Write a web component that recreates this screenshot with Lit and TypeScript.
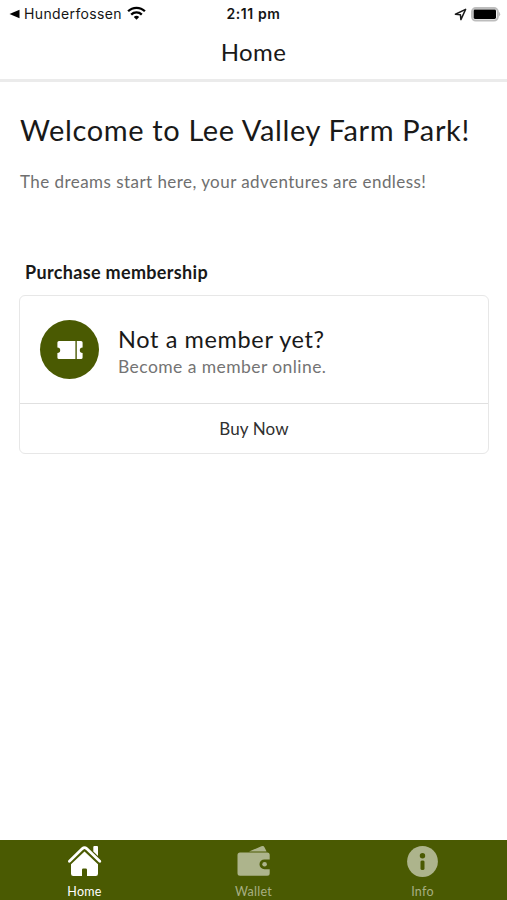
import { LitElement, html, css, svg } from "lit";
import { customElement, property } from "lit/decorators.js";

@customElement("status-bar")
class StatusBar extends LitElement {
  static styles = css`
    :host { display: grid; grid-template-columns: 1fr auto 1fr; align-items: center; height: 28px; font: 14px/28px Inter, sans-serif; color: #151515; }
    .left { display: flex; align-items: center; padding-left: 9px; }
    .back { margin-right: 4px; }
    .carrier { font-size: 14px; letter-spacing: 0.37px; }
    .wifi { margin-left: 5px; margin-top: -2px; }
    .time { font-weight: 600; letter-spacing: 0.6px; font-size: 14px; }
    .right { display: flex; align-items: center; justify-content: flex-end; padding-right: 6px; gap: 4px; }
  `;
  render() {
    return html`
      <div class="left">
        <svg class="back" width="11" height="10" viewBox="0 0 11 10"><path d="M0.5 5 L10.5 0.8 V9.2 Z" fill="#000" /></svg>
        <span class="carrier">Hunderfossen</span>
        <svg class="wifi" width="19" height="14" viewBox="0 0 19 14" fill="none" stroke="#000" stroke-width="2.3">
          <path d="M1.1 5.3 A11.8 11.8 0 0 1 17.9 5.3" />
          <path d="M4.2 8.6 A7.6 7.6 0 0 1 14.8 8.6" />
          <path d="M9.5 13.8 L6.8 11.1 A3.8 3.8 0 0 1 12.2 11.1 Z" fill="#000" stroke="none" />
        </svg>
      </div>
      <div class="time">2:11 pm</div>
      <div class="right">
        <svg width="13" height="13" viewBox="0 0 13 13"><path d="M1.4 6.3 L11.6 1.4 L6.9 11.6 L6.4 6.7 Z" fill="none" stroke="#1a1a1a" stroke-width="1.5" stroke-linejoin="round" /></svg>
        <svg width="30" height="15" viewBox="0 0 30 15">
          <rect x="1" y="1" width="25.8" height="12.6" rx="3.8" fill="#fff" stroke="#bdbdbd" stroke-width="2" />
          <rect x="2.6" y="2.6" width="22.4" height="9.4" rx="1.4" fill="#000" />
          <path d="M27.6 4.6 Q30.8 7.3 27.6 10 Z" fill="#bdbdbd" />
        </svg>
      </div>`;
  }
}

@customElement("offer-card")
class OfferCard extends LitElement {
  static styles = css`
    :host { display: block; box-sizing: border-box; height: 159px; border: 1.5px solid #e7e7e7; border-radius: 6px; background: #fff; font-family: Lato, sans-serif; }
    .body { display: flex; align-items: center; height: 107px; box-sizing: border-box; padding-left: 20px; gap: 20px; }
    .badge { width: 59px; height: 59px; border-radius: 50%; background: #4a5a02; display: flex; align-items: center; justify-content: center; }
    .heading { font-size: 23.5px; line-height: 30px; color: #191919; letter-spacing: 0.63px; margin: 4px 0 0 -1px; }
    .text { font-size: 17.5px; line-height: 26px; color: #747474; letter-spacing: 0.43px; margin: 0 0 0 -1px; }
    .action { height: 49px; border-top: 1px solid #e0e0e0; text-align: center; font-size: 17px; line-height: 50px; color: #303030; letter-spacing: 0.1px; }
  `;
  render() {
    return html`
      <div class="body">
        <div class="badge">
          <svg width="26" height="18" viewBox="0 0 26 18" fill="#fff">
            <path d="M2 0 H18.4 V18 H2 Q0.4 18 0.4 16.4 V12 A2.8 2.8 0 0 0 0.4 6.4 V1.6 Q0.4 0 2 0 Z" />
            <path d="M19.8 0 H24 Q25.6 0 25.6 1.6 V6.4 A2.8 2.8 0 0 0 25.6 12 V16.4 Q25.6 18 24 18 H19.8 Z" />
          </svg>
        </div>
        <div>
          <div class="heading">Not a member yet?</div>
          <div class="text">Become a member online.</div>
        </div>
      </div>
      <div class="action">Buy Now</div>`;
  }
}

const icons: Record<string, unknown> = {
  Home: svg`
    <path d="M2.4 17.2 L15.4 4.6 Q17.5 2.7 19.6 4.6 L32.8 17.2" fill="none" stroke="#fff" stroke-width="2.8" stroke-linecap="round" />
    <path d="M26.3 3 Q26.3 2 27.3 2 H30 Q31 2 31 3 V12.1 L26.3 7.6 Z" fill="#fff" />
    <path d="M17.5 7.6 L31 20.3 V29.8 Q31 32 28.8 32 H20 V25.8 Q20 24.5 18.7 24.5 H16.3 Q15 24.5 15 25.8 V32 H6.2 Q4 32 4 29.8 V20.3 Z" fill="#fff" />`,
  Wallet: svg`
    <path d="M13 7.6 L25.4 2.2 Q27.6 1.3 28.6 3.4 L30.6 7.6 Z" fill="#adb48c" />
    <path d="M4 8.6 H31.2 Q33.7 8.6 33.7 11.1 V15.4 H28.4 A4.9 4.9 0 0 0 28.4 25.2 H33.7 V29.2 Q33.7 31.7 31.2 31.7 H4 Q1.5 31.7 1.5 29.2 V11.1 Q1.5 8.6 4 8.6 Z" fill="#adb48c" />
    <circle cx="28.6" cy="20.3" r="2.3" fill="#adb48c" />`,
  Info: svg`
    <circle cx="17.5" cy="17.5" r="15.4" fill="#adb48c" />
    <circle cx="17.5" cy="11.8" r="2.7" fill="#4a5a02" />
    <path d="M15.5 17.8 Q15.5 16.5 17.5 16.5 Q19.5 16.5 19.5 17.8 V24.7 Q19.5 26 17.5 26 Q15.5 26 15.5 24.7 Z" fill="#4a5a02" />`,
};

@customElement("tab-item")
class TabItem extends LitElement {
  @property() label = "Home";
  @property({ type: Boolean, reflect: true }) active = false;
  static styles = css`
    :host { display: flex; flex-direction: column; align-items: center; padding-top: 4px; color: #a7af83; font: 12.5px/18px Lato, sans-serif; letter-spacing: 0.25px; }
    :host([active]) { color: #fff; }
    .label { margin-top: 4px; }
    .icon { display: block; }
  `;
  render() {
    return html`<svg class="icon" width="35" height="35" viewBox="0 0 35 35">${icons[this.label]}</svg>
      <span class="label">${this.label}</span>`;
  }
}

@customElement("app-root")
class AppRoot extends LitElement {
  static styles = css`
    :host { display: flex; flex-direction: column; height: 900px; background: #fff; font-family: Lato, sans-serif; color: #191919; overflow: hidden; }
    .title { height: 51px; text-align: center; font-size: 24px; line-height: 47px; letter-spacing: 0.4px; }
    .rule { height: 3px; background: #ebebeb; }
    main { flex: 1; padding: 0 18px 0 19px; }
    .welcome { margin: 28px 0 0 1px; font-size: 29px; line-height: 40px; font-weight: 400; letter-spacing: 0.64px; white-space: nowrap; }
    .intro { margin: 20px 0 0 1px; font-size: 17px; line-height: 24px; color: #6f6f6f; letter-spacing: 0.45px; white-space: nowrap; }
    .section { margin: 66px 0 11px 6px; font-size: 18px; line-height: 24px; font-weight: 700; letter-spacing: 0.33px; }
    nav { display: grid; grid-template-columns: repeat(3, 1fr); height: 60px; background: #4a5a02; }
  `;
  render() {
    return html`
      <status-bar></status-bar>
      <div class="title">Home</div>
      <div class="rule"></div>
      <main>
        <h1 class="welcome">Welcome to Lee Valley Farm Park!</h1>
        <p class="intro">The dreams start here, your adventures are endless!</p>
        <h2 class="section">Purchase membership</h2>
        <offer-card></offer-card>
      </main>
      <nav>
        <tab-item label="Home" active></tab-item>
        <tab-item label="Wallet"></tab-item>
        <tab-item label="Info"></tab-item>
      </nav>`;
  }
}
